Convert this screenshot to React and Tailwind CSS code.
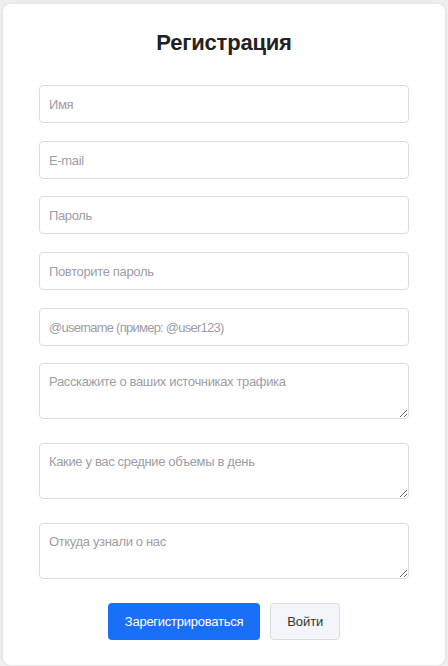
import React from "react";

const inputCls =
  "block w-full h-[38px] rounded-[4px] border border-[#dcdcdc] bg-white px-[9px] text-[13px] text-[#333] outline-none placeholder:text-[#9d9da5]";
const areaCls =
  "block w-full h-[56px] rounded-[4px] border border-[#dcdcdc] bg-white px-[9px] py-[10px] text-[13px] tracking-[-0.35px] leading-[15px] text-[#333] outline-none placeholder:text-[#9d9da5]";

export default function App() {
  return (
    <div
      className="min-h-[666px] bg-[#efefef] pt-[4px] px-[3px]"
      style={{ fontFamily: '"Liberation Sans", Arial, sans-serif' }}
    >
      <div className="h-[661px] rounded-[8px] bg-white px-[36px] pt-[24px] shadow-[0_0_4px_rgba(0,0,0,0.08)]">
        <h2 className="text-center text-[22px] leading-[30px] font-bold tracking-[-0.2px] text-[#222]">
          Регистрация
        </h2>
        <form className="mt-[27px] flex flex-col" onSubmit={(e) => e.preventDefault()}>
          <input className={inputCls + " tracking-[-0.35px]"} placeholder="Имя" />
          <input className={inputCls + " mt-[18px] tracking-[-0.35px]"} placeholder="E-mail" />
          <input className={inputCls + " mt-[17px] tracking-[-0.35px]"} placeholder="Пароль" type="password" />
          <input className={inputCls + " mt-[18px] tracking-[-0.35px]"} placeholder="Повторите пароль" type="password" />
          <input className={inputCls + " mt-[18px] tracking-[-0.75px]"} placeholder="@username (пример: @user123)" />
          <textarea className={areaCls + " mt-[17px]"} placeholder="Расскажите о ваших источниках трафика" />
          <textarea className={areaCls + " mt-[24px]"} placeholder="Какие у вас средние объемы в день" />
          <textarea className={areaCls + " mt-[24px]"} placeholder="Откуда узнали о нас" />
          <div className="mt-[24px] flex justify-center gap-[10px]">
            <button
              type="submit"
              className="h-[37px] rounded-[4px] bg-[#1a6ff8] px-[17px] text-[13px] tracking-[-0.25px] text-white"
            >
              Зарегистрироваться
            </button>
            <button
              type="button"
              className="h-[37px] rounded-[4px] border border-[#dcdcdc] bg-[#f3f5f9] px-[16px] text-[13px] tracking-[-0.1px] text-[#333]"
            >
              Войти
            </button>
          </div>
        </form>
      </div>
    </div>
  );
}
